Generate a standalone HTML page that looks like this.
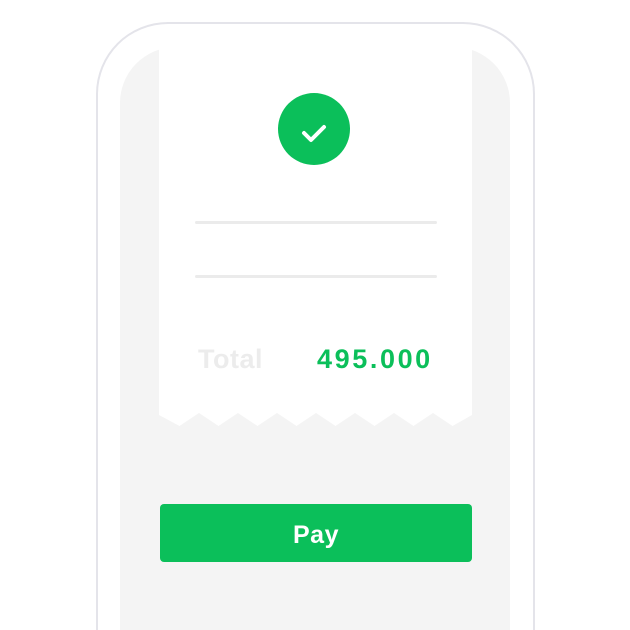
<!DOCTYPE html>
<html><head><style>
html,body{margin:0;width:630px;height:630px;overflow:hidden}
body{background:#fff;position:relative;font-family:"Liberation Sans",sans-serif}
.phone{position:absolute;left:96px;top:22px;width:439px;height:608px;border:2px solid #e4e4ea;border-bottom:none;border-radius:72px 72px 0 0;box-sizing:border-box}
.screen{position:absolute;left:120px;top:47px;width:390px;height:583px;background:#f4f4f4;border-radius:56px 56px 0 0}
.receipt{position:absolute;left:159px;top:47px;width:313px;height:366px;background:#fff}
.circ{position:absolute;left:278px;top:93px;width:72px;height:72px;border-radius:50%;background:#0bbf5a}
.line{position:absolute;left:195px;width:242px;height:3px;background:#ebebeb;border-radius:2px}
.t{position:absolute;top:344px;font-size:27px;font-weight:bold}
.pay{position:absolute;left:160px;top:504px;width:312px;height:58px;background:#0bbf5a;border-radius:4px;color:#fff;font-size:25px;font-weight:bold;text-align:center;line-height:62px;letter-spacing:0.5px}
</style></head><body>
<div class="phone"></div>
<div class="screen"></div>
<div class="receipt"></div>
<svg style="position:absolute;left:159px;top:412px" width="313" height="16" viewBox="0 0 313 16"><path d="M0 0 L313 0 L313 3 L293.5 14 L274 1 L254.5 14 L235 1 L215.5 14 L196 1 L176.5 14 L157 1 L137.5 14 L118 1 L98.5 14 L79 1 L59.5 14 L40 1 L20.5 14 L0 3 Z" fill="#fff"/></svg>
<div class="circ"><svg width="72" height="72"><path d="M26 40 L33 47 L46 34" stroke="#fff" stroke-width="4" fill="none" stroke-linecap="round" stroke-linejoin="round"/></svg></div>
<div class="line" style="top:221px"></div>
<div class="line" style="top:275px"></div>
<div class="t" style="left:198px;color:#ececec;letter-spacing:0.5px">Total</div>
<div class="t" style="left:317px;color:#0bbf5a;letter-spacing:2.6px">495.000</div>
<div class="pay">Pay</div>
</body></html>
